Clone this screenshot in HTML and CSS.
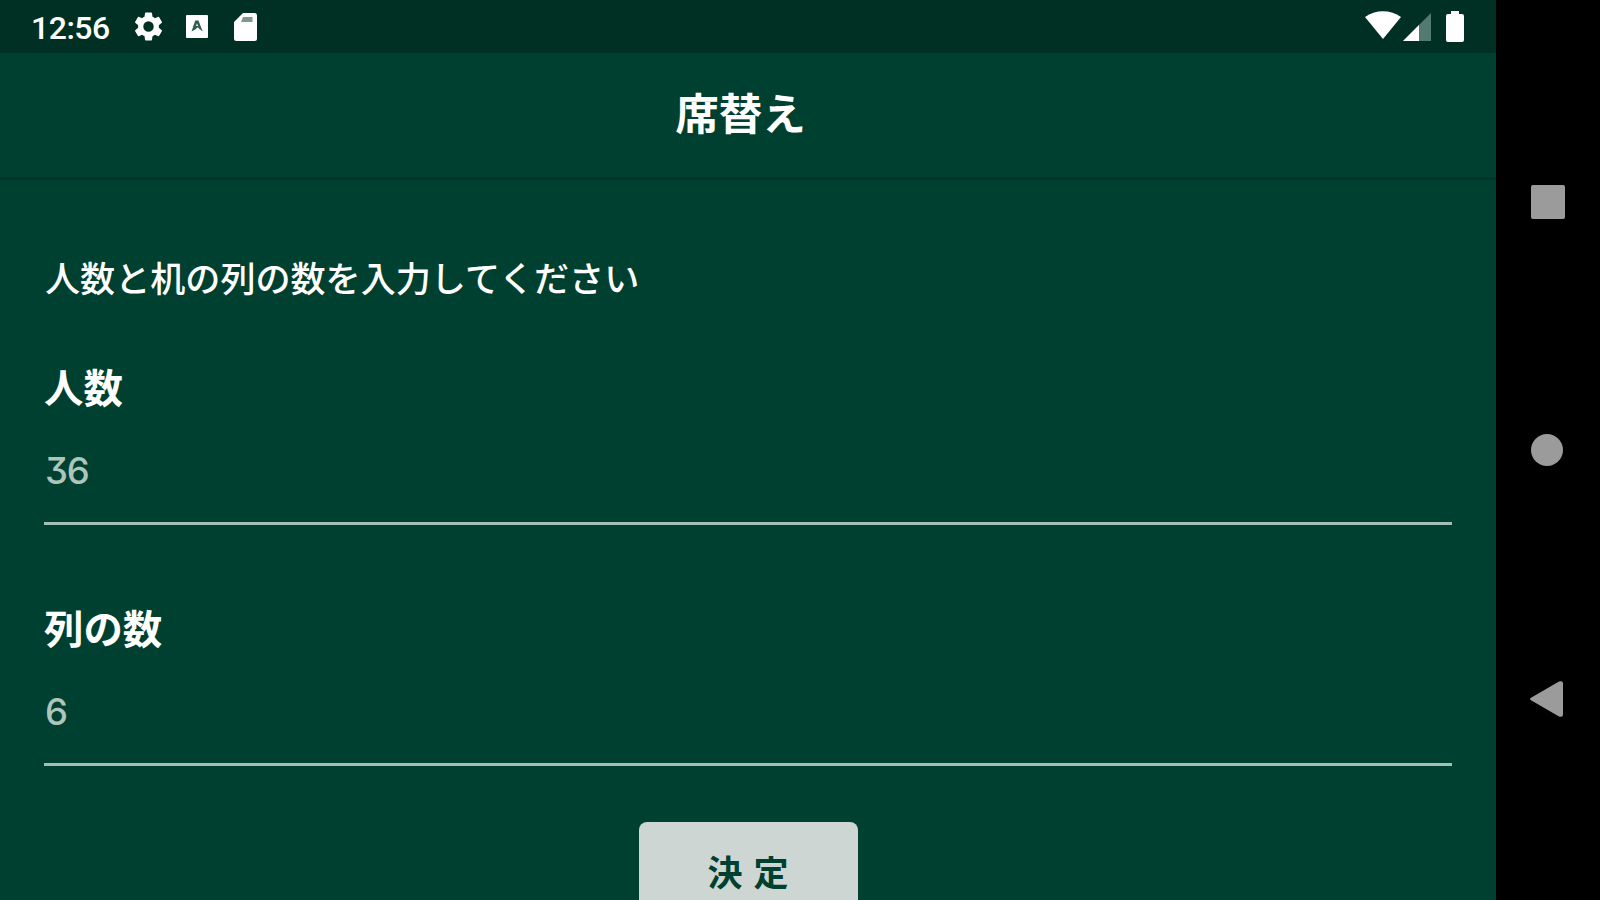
FILE: index.html
```html
<!DOCTYPE html>
<html lang="ja">
<head>
  <meta charset="UTF-8">
  <meta name="viewport" content="width=device-width, initial-scale=1.0">
  <title>席替え</title>
  <link rel="stylesheet" href="styles.css">
</head>
<body>
  <div class="app">
    <div class="status-bar">
      <div class="status-left">
        <span class="clock">12:56</span>
        <svg class="icon-gear" viewBox="2 2 20 20"><path d="M19.14 12.94c.04-.3.06-.61.06-.94s-.02-.64-.07-.94l2.03-1.58a.49.49 0 0 0 .12-.61l-1.92-3.32a.49.49 0 0 0-.59-.22l-2.39.96a7 7 0 0 0-1.62-.94l-.36-2.54a.48.48 0 0 0-.48-.41h-3.84a.48.48 0 0 0-.47.41l-.36 2.54a7.3 7.3 0 0 0-1.62.94l-2.39-.96a.48.48 0 0 0-.59.22L2.74 8.87a.48.48 0 0 0 .12.61l2.03 1.58a6 6 0 0 0 0 1.88l-2.03 1.58a.49.49 0 0 0-.12.61l1.92 3.32c.12.22.37.29.59.22l2.39-.96c.5.38 1.03.7 1.62.94l.36 2.54c.05.24.24.41.48.41h3.84c.24 0 .44-.17.47-.41l.36-2.54a7 7 0 0 0 1.62-.94l2.39.96c.22.08.47 0 .59-.22l1.92-3.32a.48.48 0 0 0-.12-.61zM12 15.6a3.6 3.6 0 1 1 0-7.2 3.6 3.6 0 0 1 0 7.2z"/></svg>
        <svg class="icon-app" viewBox="0 0 22 23"><rect width="22" height="23" rx="1"/><path class="mark" d="M9.2 5.500h3.300l4.200 11-3-2.200-2-2-2 2-4.200 2.200z"/><path d="M11 8.200l-1 2.800h2z"/></svg>
        <svg class="icon-sd" viewBox="0 0 23 28"><path d="M9 0h11.500a2.500 2.500 0 0 1 2.500 2.500v23a2.500 2.500 0 0 1-2.500 2.500H2.500a2.500 2.500 0 0 1-2.500-2.500V9z"/><path class="slot" d="M9 4h9.500v5H7z"/></svg>
      </div>
      <div class="status-right">
        <svg class="icon-wifi" viewBox="0 0 36 28"><path d="M0 6Q8 .3 18 .3T36 6L18 28z"/></svg>
        <svg class="icon-signal" viewBox="0 0 28 28"><path class="dim" d="M28 0v28H0z"/><path d="M16 12v16H0z"/></svg>
        <svg class="icon-battery" viewBox="0 0 18 31"><path d="M5 0h8v3h3a2 2 0 0 1 2 2v24a2 2 0 0 1-2 2H2a2 2 0 0 1-2-2V5a2 2 0 0 1 2-2h3z"/></svg>
      </div>
    </div>

    <header class="header">
      <h1>席替え</h1>
    </header>

    <main class="content">
      <p class="message">人数と机の列の数を入力してください</p>
      <div class="form-group">
        <label for="people">人数</label>
        <input type="text" id="people" placeholder="36">
      </div>
      <div class="form-group">
        <label for="columns">列の数</label>
        <input type="text" id="columns" placeholder="6">
      </div>
      <button type="button" class="submit-btn">決定</button>
    </main>
  </div>

  <nav class="nav-bar">
    <svg class="nav-recent" viewBox="0 0 34 34"><rect width="34" height="34" rx="2"/></svg>
    <svg class="nav-home" viewBox="0 0 32 32"><circle cx="16" cy="16" r="16"/></svg>
    <svg class="nav-back" viewBox="0 0 33 36"><path d="M1 16.800L29 .600q4-1.500 4 2v30.800q0 3.500-4 2L1 19.200q-2-1.200 0-2.400z"/></svg>
  </nav>
</body>
</html>
```
FILE: styles.css
```css
* {
  box-sizing: border-box;
}

body {
  margin: 0;
  height: 100vh;
  display: flex;
  overflow: hidden;
  background-color: #000;
  color: #fff;
  font-family: "Noto Sans CJK JP", sans-serif;
}

.app {
  width: 1496px;
  height: 900px;
  overflow: hidden;
  background-color: #004030;
}

/* Status bar */
.status-bar {
  height: 53px;
  padding: 0 32px 0 31px;
  display: flex;
  justify-content: space-between;
  background-color: #003024;
}

.status-bar svg {
  fill: #fff;
}

.status-left,
.status-right {
  display: flex;
  align-items: center;
}

.clock {
  width: 103px;
  font-family: Roboto, sans-serif;
  font-size: 32px;
  font-weight: 500;
  letter-spacing: -0.5px;
  line-height: 53px;
  padding-top: 3px;
}

.icon-gear {
  width: 29px;
  height: 29px;
  margin-right: 23px;
}

.icon-app {
  width: 22px;
  height: 23px;
  margin-right: 26px;
}

.icon-app .mark {
  fill: #345b50;
}

.icon-sd {
  width: 23px;
  height: 28px;
}

.icon-sd .slot {
  fill: #7d9991;
}

.icon-wifi {
  width: 36px;
  height: 28px;
  margin: 0 2px 3px 0;
}

.icon-signal {
  width: 28px;
  height: 28px;
  margin-right: 15px;
}

.icon-signal .dim {
  fill: #527a6e;
}

.icon-battery {
  width: 18px;
  height: 31px;
  margin-bottom: 1px;
}

/* Header */
.header {
  height: 127px;
  padding-right: 15px;
  border-bottom: 3px solid #003629;
  text-align: center;
}

.header h1 {
  margin: 0;
  font-size: 43.5px;
  font-weight: bold;
  line-height: 117px;
}

/* Form */
.content {
  padding: 67px 44px 0;
  display: flex;
  flex-direction: column;
}

.message {
  margin: 0 0 41px 1px;
  font-size: 35.1px;
  font-weight: 500;
  line-height: 60px;
}

.form-group {
  height: 241px;
  display: flex;
  flex-direction: column;
}

.form-group + .form-group {
  height: 233px;
}

.form-group label {
  font-size: 39.4px;
  font-weight: bold;
  line-height: 76px;
}

.form-group input {
  height: 101px;
  padding: 0 0 5px 1px;
  border: none;
  border-bottom: 3px solid #a3beb3;
  background: transparent;
  color: #fff;
  font-family: Inter, sans-serif;
  font-size: 36.5px;
  font-weight: 500;
  letter-spacing: -1.2px;
  font-feature-settings: "cv09";
}

.form-group input::placeholder {
  color: #adc5bb;
  opacity: 1;
}

.submit-btn {
  flex: none;
  align-self: center;
  width: 219px;
  height: 102px;
  padding: 0 0 5px 11px;
  border: none;
  border-radius: 8px;
  background-color: #cdd6d2;
  color: #004030;
  font-family: inherit;
  font-size: 35px;
  font-weight: bold;
  letter-spacing: 11px;
}

/* Android navigation */
.nav-bar {
  width: 104px;
  height: 900px;
  padding: 185px 0 0 35px;
  display: flex;
  flex-direction: column;
}

.nav-bar svg {
  fill: #9b9b9b;
}

.nav-recent {
  width: 34px;
  height: 34px;
  margin-bottom: 215px;
}

.nav-home {
  width: 32px;
  height: 32px;
  margin-bottom: 215px;
}

.nav-back {
  width: 33px;
  height: 36px;
  margin-left: -1px;
}
```
